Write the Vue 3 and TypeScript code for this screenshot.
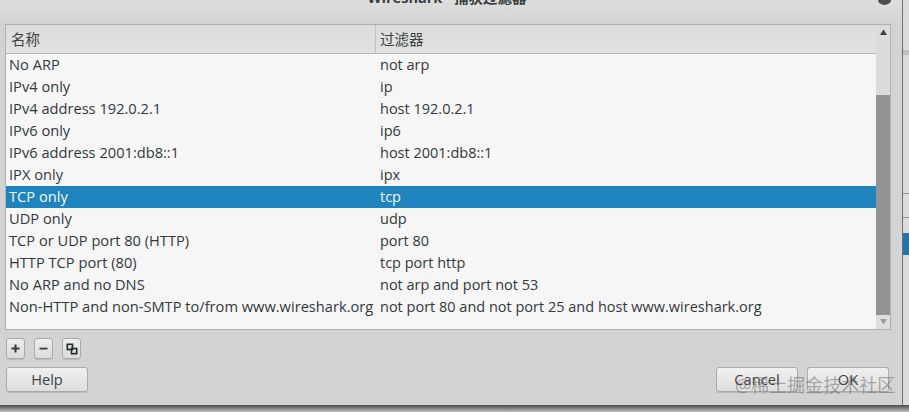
<script setup lang="ts">
const rows: [string, string][] = [
  ['No ARP', 'not arp'],
  ['IPv4 only', 'ip'],
  ['IPv4 address 192.0.2.1', 'host 192.0.2.1'],
  ['IPv6 only', 'ip6'],
  ['IPv6 address 2001:db8::1', 'host 2001:db8::1'],
  ['IPX only', 'ipx'],
  ['TCP only', 'tcp'],
  ['UDP only', 'udp'],
  ['TCP or UDP port 80 (HTTP)', 'port 80'],
  ['HTTP TCP port (80)', 'tcp port http'],
  ['No ARP and no DNS', 'not arp and port not 53'],
  ['Non-HTTP and non-SMTP to/from www.wireshark.org', 'not port 80 and not port 25 and host www.wireshark.org'],
]
</script>

<template>
  <div class="screen">
    <div class="top">
      <main class="dialog">
        <header class="titlebar">
          <span class="title">Wireshark · 捕获过滤器</span>
          <span class="close"></span>
        </header>
        <section class="list">
          <div class="table">
            <div class="thead">
              <div class="th name">名称</div>
              <div class="th">过滤器</div>
            </div>
            <div class="tbody">
              <div v-for="(r, i) in rows" :key="r[0]" class="row" :class="{ sel: i === 6 }">
                <div class="td name">{{ r[0] }}</div>
                <div class="td filter">{{ r[1] }}</div>
              </div>
            </div>
          </div>
          <div class="scroll">
            <div class="arrow">
              <svg width="7" height="6" viewBox="0 0 7 6"><path d="M3.5 0.5 7 6H0z" fill="#3c4042" /></svg>
            </div>
            <div class="track"><div class="thumb"></div></div>
            <div class="arrow down">
              <svg width="7" height="6" viewBox="0 0 7 6"><path d="M0 0h7L3.5 5.5z" fill="#9a9d9d" /></svg>
            </div>
          </div>
        </section>
        <div class="tools">
          <button class="tool">
            <svg width="11" height="11" viewBox="0 0 11 11"><path d="M4.5 1.5h2v3h3v2h-3v3h-2v-3h-3v-2h3z" fill="#33393b" /></svg>
          </button>
          <button class="tool">
            <svg width="11" height="11" viewBox="0 0 11 11"><path d="M1.5 4.7h8v1.8h-8z" fill="#33393b" /></svg>
          </button>
          <button class="tool">
            <svg width="12" height="12" viewBox="0 0 12 12" fill="none" stroke="#2b3032" stroke-width="1.7"><rect x="1.3" y="1.3" width="5.2" height="5.2" /><rect x="5.5" y="5.5" width="5.2" height="5.2" /></svg>
          </button>
        </div>
        <footer class="actions">
          <button class="btn">Help</button>
          <div class="right">
            <button class="btn">Cancel</button>
            <button class="btn">OK</button>
          </div>
        </footer>
        <div class="mark">@稀土掘金技术社区</div>
      </main>
      <aside class="behind">
        <div class="b1"></div>
        <div class="b2"></div>
        <div class="b3"></div>
        <div class="b4"></div>
        <div class="b5"></div>
      </aside>
    </div>
    <div class="shadow"></div>
  </div>
</template>

<style>
html, body { margin: 0; background: #8d8d8d; }
</style>

<style scoped>
.screen {
  width: 909px;
  height: 412px;
  overflow: hidden;
  display: flex;
  flex-direction: column;
  font-family: "Open Sans", "Noto Sans CJK SC", sans-serif;
  color: #33393b;
}
.top { display: flex; height: 405px; flex: none; }
.shadow { flex: 1; background: linear-gradient(#4a4a4a, #9a9a9a 70%, #c4c4c4); }
.dialog {
  position: relative;
  width: 902px;
  flex: none;
  box-sizing: border-box;
  padding: 0 11px 0 5px;
  background: #d3d3d3;
  display: flex;
  flex-direction: column;
}
.titlebar {
  height: 24px;
  margin: 0 -11px 0 -5px;
  background: linear-gradient(#dedede, #d4d4d4);
  display: flex;
  justify-content: center;
  overflow: hidden;
  flex: none;
}
.title {
  margin-top: -12px;
  margin-right: 8px;
  height: 20px;
  line-height: 20px;
  font-size: 14.5px;
  font-weight: 700;
  color: #3a3e40;
}
.close {
  position: absolute;
  top: -5px;
  left: 878px;
  width: 13px;
  height: 10px;
  border-radius: 50%;
  background: #4c4f50;
}
.list {
  display: flex;
  height: 306px;
  flex: none;
  box-sizing: border-box;
  border: 1px solid #b0b2b2;
  background: #f6f6f6;
}
.table { flex: 1; min-width: 0; display: flex; flex-direction: column; }
.thead {
  display: flex;
  height: 29px;
  flex: none;
  box-sizing: border-box;
  border-bottom: 1px solid #b5b7b7;
  background: linear-gradient(#dcdcdc, #e2e2e2);
}
.th {
  padding-left: 4px;
  font-size: 14.5px;
  line-height: 30px;
  color: #3c4143;
}
.th.name { border-right: 1px solid #c0c2c2; padding-left: 5px; width: 364px; }
.tbody { flex: 1; }
.row { display: flex; align-items: baseline; height: 22px; line-height: 21px; font-size: 14.65px; }
.td { padding-left: 3px; white-space: nowrap; }
.td.name { width: 368px; }
.td.filter { font-size: 14.5px; }
.sel { background: #1f83bd; color: #f6f8fa; }
.scroll {
  width: 14px;
  flex: none;
  display: flex;
  flex-direction: column;
  background: #dcdcdc;
}
.arrow {
  height: 14px;
  flex: none;
  display: flex;
  align-items: center;
  justify-content: center;
}
.down { background: #dedede; }
.track { flex: 1; padding-top: 56px; display: flex; }
.thumb { flex: 1; background: #939393; }
.tools { display: flex; gap: 9px; margin-top: 8px; padding-left: 1px; flex: none; }
.tool {
  width: 19px;
  height: 21px;
  padding: 0;
  display: flex;
  align-items: center;
  justify-content: center;
  border: 1px solid #a9abab;
  border-radius: 3px;
  background: linear-gradient(#ededed, #dcdcdc);
  box-shadow: 0 1px 0 #bbb;
}
.actions {
  display: flex;
  justify-content: space-between;
  margin-top: 8px;
  padding: 0 2px 0 1px;
  flex: none;
}
.right { display: flex; gap: 9px; }
.btn {
  width: 82px;
  height: 25px;
  padding: 0;
  border: 1px solid #a9abab;
  border-radius: 3px;
  background: linear-gradient(#f0f0f0, #dedede);
  box-shadow: 0 1px 0 #bbb;
  font: inherit;
  font-size: 14.65px;
  line-height: 23px;
  color: #3c4143;
}
.mark {
  position: absolute;
  left: 735px;
  top: 373px;
  font-size: 18px;
  line-height: 25px;
  white-space: nowrap;
  color: rgba(100, 100, 100, 0.5);
}
.behind {
  flex: 1;
  display: flex;
  flex-direction: column;
  background: #dcdcdc;
  border-left: 1px solid #6e6e6e;
}
.b1 { height: 50px; }
.b2 { height: 5px; background: #bfbfbf; }
.b3 { height: 138px; border-bottom: 1px solid #8e8e8e; }
.b4 { height: 23px; border-bottom: 1px solid #8e8e8e; }
.b5 { height: 22px; margin-top: 15px; background: #1b78ae; }
</style>
